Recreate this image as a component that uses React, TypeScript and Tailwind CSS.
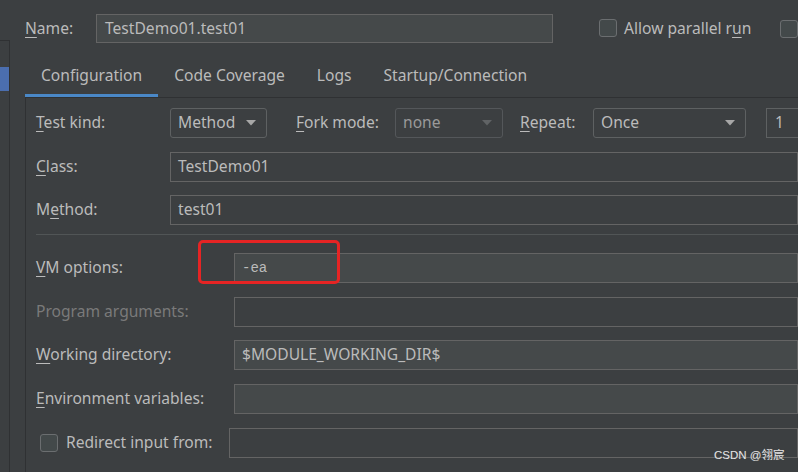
import React from "react";

const U = ({ children }: { children: React.ReactNode }) => (
  <span className="underline decoration-1 underline-offset-[3px]">{children}</span>
);

function Arrow({ disabled }: { disabled?: boolean }) {
  return (
    <svg width="10" height="6" viewBox="0 0 10 6">
      <path d="M0 0H10L5 5.5Z" fill={disabled ? "#606365" : "#a7a7a7"} />
    </svg>
  );
}

function Combo({ text, w, disabled }: { text: string; w: string; disabled?: boolean }) {
  return (
    <div
      className={`${w} h-[30px] shrink-0 rounded-[3px] border flex items-center justify-between pl-[7px] pr-[10px] ${
        disabled ? "border-[#54575a] text-[#9a9a9a]" : "border-[#5e6162] text-[#bbbbbb]"
      }`}
    >
      <span>{text}</span>
      <Arrow disabled={disabled} />
    </div>
  );
}

function Checkbox() {
  return <div className="w-[18px] h-[18px] shrink-0 rounded-[3px] border border-[#6b6e70] bg-[#43494a]" />;
}

function Field({ children, light, className = "" }: { children?: React.ReactNode; light?: boolean; className?: string }) {
  return (
    <div
      className={`flex-1 h-[30px] border border-[#646464] flex items-center pl-[7px] ${
        light ? "bg-[#45494a]" : "bg-[#3c3f41]"
      } ${className}`}
    >
      {children}
    </div>
  );
}

export default function App() {
  return (
    <div
      className="relative w-[798px] h-[472px] overflow-hidden bg-[#3c3f41] text-[#bbbbbb] text-[15.6px] flex"
      style={{ fontFamily: '"Noto Sans", "Noto Sans CJK SC", sans-serif' }}
    >
      {/* left strip */}
      <div className="w-[10px] shrink-0 pt-[40px] flex flex-col">
        <div className="flex-1 border-t border-r border-[#2f3133]">
          <div className="mt-[26px] w-[9px] h-[24px] bg-[#4b6eaf]" />
        </div>
      </div>

      {/* main */}
      <div className="flex-1 flex flex-col min-w-0">
        {/* name row */}
        <div className="mt-[14px] pl-[15px] h-[29px] flex items-center">
          <div className="w-[71px] shrink-0">
            <U>N</U>ame:
          </div>
          <div className="w-[457px] h-[29px] shrink-0 bg-[#45494a] border border-[#646464] flex items-center pl-[8px]">
            TestDemo01.test01
          </div>
          <div className="ml-[46px] flex items-center gap-[7px] shrink-0">
            <Checkbox />
            <span>
              Allow parallel r<U>u</U>n
            </span>
          </div>
          <div className="ml-[29px] shrink-0">
            <Checkbox />
          </div>
        </div>

        {/* tabs */}
        <div className="mt-[14px] pl-[15px] flex">
          <div className="h-[40px] px-4 flex items-center border-b-[3px] border-[#4a88c7]">Configuration</div>
          <div className="h-[40px] px-4 flex items-center pb-[3px]">Code Coverage</div>
          <div className="h-[40px] px-4 flex items-center pb-[3px]">Logs</div>
          <div className="h-[40px] px-4 flex items-center pb-[3px]">Startup/Connection</div>
        </div>

        {/* panel */}
        <div className="ml-[15px] flex-1 border-l border-t border-[#2f3133] pl-[10px] pt-[10px] flex flex-col">
          {/* Test kind */}
          <div className="h-[30px] flex items-center">
            <div className="w-[134px] shrink-0">
              <U>T</U>est kind:
            </div>
            <Combo text="Method" w="w-[97px]" />
            <div className="ml-[29px] w-[99px] shrink-0">
              <U>F</U>ork mode:
            </div>
            <Combo text="none" w="w-[108px]" disabled />
            <div className="ml-[17px] w-[73px] shrink-0">
              <U>R</U>epeat:
            </div>
            <Combo text="Once" w="w-[153px]" />
            <div className="ml-[20px] w-[60px] h-[30px] shrink-0 border border-[#5e6162] flex items-center pl-[8px]">1</div>
          </div>

          {/* Class */}
          <div className="mt-[14px] h-[29px] flex items-center">
            <div className="w-[134px] shrink-0">
              <U>C</U>lass:
            </div>
            <Field className="h-[29px]">TestDemo01</Field>
          </div>

          {/* Method */}
          <div className="mt-[14px] h-[29px] flex items-center">
            <div className="w-[134px] shrink-0">
              M<U>e</U>thod:
            </div>
            <Field className="h-[29px]">test01</Field>
          </div>

          <div className="mt-[10px] h-px bg-[#515556]" />

          {/* VM options */}
          <div className="mt-[18px] h-[30px] flex items-center">
            <div className="w-[198px] shrink-0">
              <U>V</U>M options:
            </div>
            <Field light>
              <span className="text-[14px]" style={{ fontFamily: '"Liberation Mono", monospace' }}>
                -ea
              </span>
            </Field>
          </div>

          {/* Program arguments */}
          <div className="mt-[14px] h-[29px] flex items-center">
            <div className="w-[198px] shrink-0 text-[#7a7a7a]">Program arguments:</div>
            <Field className="h-[29px]" />
          </div>

          {/* Working directory */}
          <div className="mt-[14px] h-[30px] flex items-center">
            <div className="w-[198px] shrink-0">
              <U>W</U>orking directory:
            </div>
            <Field light>$MODULE_WORKING_DIR$</Field>
          </div>

          {/* Environment variables */}
          <div className="mt-[14px] h-[30px] flex items-center">
            <div className="w-[198px] shrink-0">
              <U>E</U>nvironment variables:
            </div>
            <Field light />
          </div>

          {/* Redirect input */}
          <div className="mt-[14px] h-[30px] flex items-center">
            <div className="w-[193px] shrink-0 pl-[4px] flex items-center gap-[8px]">
              <Checkbox />
              <span>Redirect input from:</span>
            </div>
            <Field />
          </div>
        </div>
      </div>

      {/* red highlight box */}
      <div className="absolute left-[198px] top-[240px] w-[142px] h-[44px] border-[3px] border-[#e62424] rounded-[5px]" />

      {/* watermark */}
      <div
        className="absolute left-[714px] top-[447px] text-[11.5px] text-[#e4e4e4]"
        style={{ fontFamily: '"Liberation Sans", "Noto Sans CJK SC", sans-serif', textShadow: "0 0 1px #555" }}
      >
        CSDN @翎宸
      </div>
    </div>
  );
}
